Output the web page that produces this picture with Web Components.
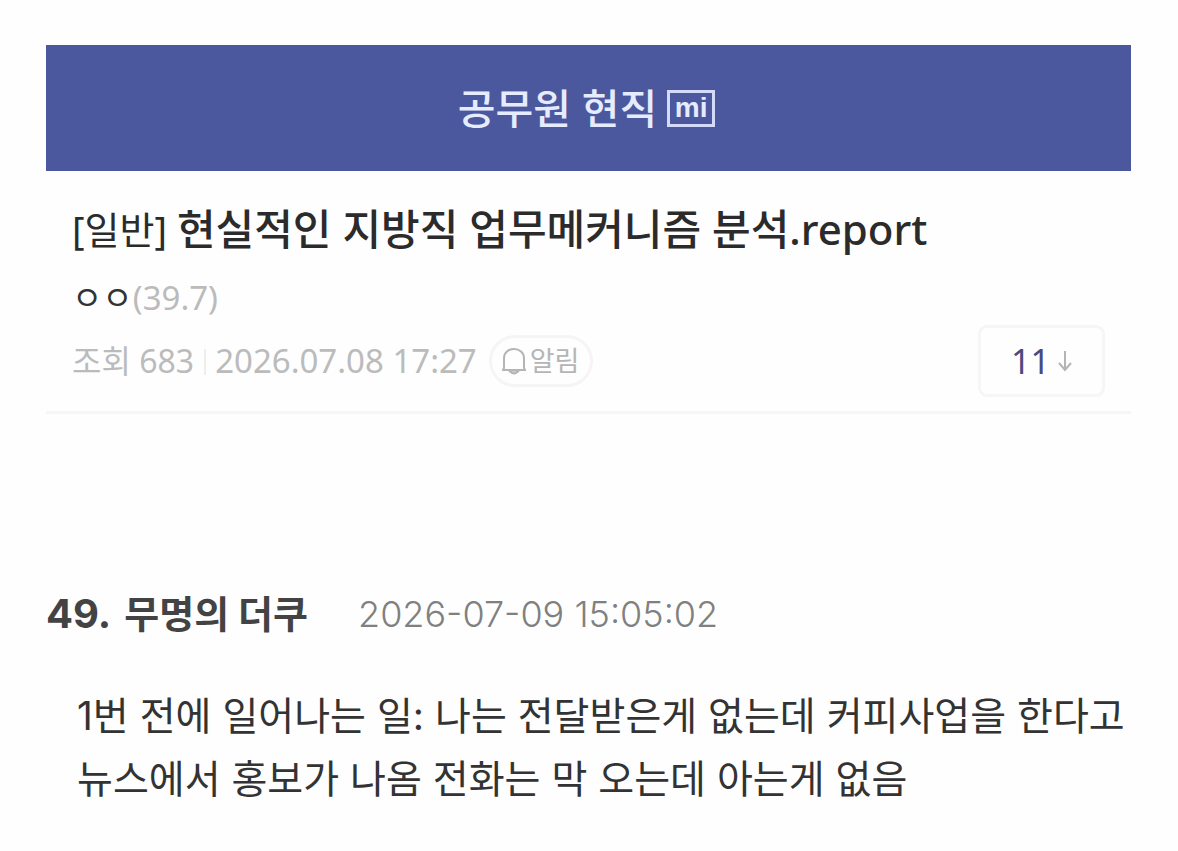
<!DOCTYPE html>
<html lang="ko">
<head>
<meta charset="utf-8">
<meta name="viewport" content="width=device-width, initial-scale=1">
<title>공무원 현직</title>
<style>
body { margin: 0; background: #fefefe; color: #333; font-family: "Noto Sans", "Noto Sans CJK KR", sans-serif; }
</style>
</head>
<body>
<board-page>
  <board-header>공무원 현직</board-header>
  <post-summary category="[일반]" ip="(39.7)" views="683" date="2026.07.08 17:27" comments="11">
    현실적인 지방직 업무메커니즘 분석.report
    <span slot="author">ㅇㅇ</span>
  </post-summary>
  <user-comment number="49." author="무명의 더쿠" date="2026-07-09 15:05:02">1번 전에 일어나는 일: 나는 전달받은게 없는데 커피사업을 한다고 뉴스에서 홍보가 나옴 전화는 막 오는데 아는게 없음</user-comment>
</board-page>

<script>
class BoardPage extends HTMLElement {
  constructor() {
    super();
    this.attachShadow({ mode: "open" }).innerHTML = `
      <style>
        :host { display: block; }
        main { padding: 45px 47px 40px 46px; }
      </style>
      <main><slot></slot></main>`;
  }
}

class BoardHeader extends HTMLElement {
  constructor() {
    super();
    this.attachShadow({ mode: "open" }).innerHTML = `
      <style>
        :host { display: block; background: #4c589e; color: #e6ecff; }
        header { display: flex; align-items: center; justify-content: center; gap: 10px; height: 126px; padding-right: 4px; }
        h1 { margin: 0; font-size: 41px; line-height: 56px; font-weight: 500; }
        .badge { display: flex; align-items: center; justify-content: center; box-sizing: border-box;
          width: 48px; height: 37px; border: 3px solid #d4dbfa; font: 700 28px/32px "Liberation Sans", sans-serif; }
      </style>
      <header><h1><slot></slot></h1><span class="badge">mi</span></header>`;
  }
}

class PostSummary extends HTMLElement {
  connectedCallback() {
    const get = name => this.getAttribute(name);
    this.attachShadow({ mode: "open" }).innerHTML = `
      <style>
        :host { display: block; border-bottom: 3px solid #f6f6f6; }
        section { display: flex; flex-direction: column; padding: 26px 26px 14px; }
        h2 { display: flex; align-items: center; gap: 10px; margin: 0; color: #2b2b2b; font-weight: 400; font-size: 42px; line-height: 64px; }
        .category { font-size: 38px; }
        .title { font-weight: 500; }
        .author { margin: 10px 0 0; font-size: 33px; line-height: 54px; color: #bbb; font-weight: 400; }
        slot[name="author"] { color: #333; }
        .row { display: flex; align-items: center; justify-content: space-between; height: 72px; }
        .meta { display: flex; align-items: center; font-size: 32px; line-height: 48px; color: #bbb; font-weight: 400; }
        .views { padding-right: 10px; }
        .date { padding-left: 11px; position: relative; font-size: 33px; }
        .date::before { content: ""; position: absolute; left: 0; top: 12px; height: 26px; border-left: 2px solid #eee; }
        button { font: inherit; background: #fefefe; cursor: pointer; display: flex; align-items: center; box-sizing: border-box; }
        .alarm { margin-left: 12px; width: 104px; height: 52px; padding: 0 0 0 10px; gap: 4px; border: 3px solid #f5f5f5; border-radius: 26px; color: #b5b5b5; font-size: 27px; }
        .jump { width: 127px; height: 72px; justify-content: center; gap: 8px; border: 3px solid #f6f6f6; border-radius: 9px; color: #4a4a80; font-size: 34px; font-weight: 400; }
      </style>
      <section>
        <h2><span class="category">${get("category")}</span><span class="title"><slot></slot></span></h2>
        <p class="author"><slot name="author"></slot>${get("ip")}</p>
        <div class="row">
          <div class="meta">
            <span class="views">조회 ${get("views")}</span>
            <time class="date">${get("date")}</time>
            <button class="alarm" type="button">
              <svg width="24" height="28" viewBox="0 0 24 28" fill="none" stroke="#b5b5b5" stroke-width="2" aria-hidden="true">
                <path d="M1 23l1-2V11C2 5.500 6.500 2 12 2s10 3.500 10 9v10l1 2z"/><path d="M7 24l2 1c1 2 5 2 6 0l2-1" fill="#ccc"/>
              </svg>알림</button>
          </div>
          <button class="jump" type="button">${get("comments")}
            <svg width="14" height="22" viewBox="0 0 14 22" fill="none" stroke="#b4b4b4" stroke-width="2" aria-hidden="true"><path d="M7 1v19M1 13l6 7 6-7"/></svg>
          </button>
        </div>
      </section>`;
  }
}

class UserComment extends HTMLElement {
  connectedCallback() {
    const get = name => this.getAttribute(name);
    this.attachShadow({ mode: "open" }).innerHTML = `
      <style>
        :host { display: block; margin-top: 172px; }
        header { display: flex; align-items: center; gap: 50px; line-height: 56px; }
        h3 { display: flex; align-items: baseline; gap: 13px; margin: 0; font: 700 38px/56px "Inter", "Noto Sans CJK KR", sans-serif; color: #434343; }
        .number { font-size: 40px; }
        time { font-family: "Inter", sans-serif; font-size: 36px; font-weight: 300; color: #808080; }
        p { margin: 42px 0 0; padding: 0 0 0 31px; font: 400 39px/63px "Inter", "Noto Sans CJK KR", sans-serif; color: #333; }
      </style>
      <article>
        <header><h3><span class="number">${get("number")}</span><span>${get("author")}</span></h3><time>${get("date")}</time></header>
        <p><slot></slot></p>
      </article>`;
  }
}

customElements.define("board-page", BoardPage);
customElements.define("board-header", BoardHeader);
customElements.define("post-summary", PostSummary);
customElements.define("user-comment", UserComment);
</script>
</body>
</html>
